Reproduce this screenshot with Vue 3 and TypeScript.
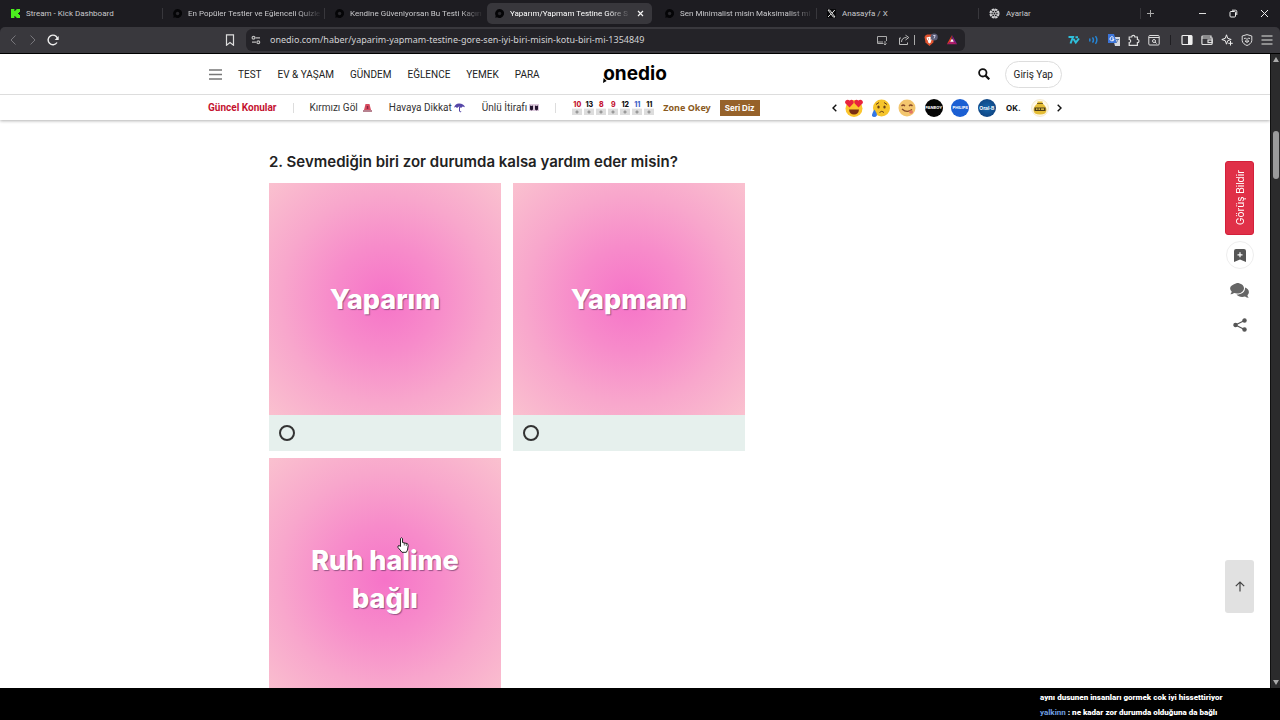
<script setup lang="ts">
import { ref } from 'vue'

interface Tab {
  title: string
  icon: 'kick' | 'onedio' | 'x' | 'gear'
}

interface Tile {
  value: number
  color: string
}

const tabs: Tab[] = [
  { title: 'Stream - Kick Dashboard', icon: 'kick' },
  { title: 'En Popüler Testler ve Eğlenceli Quizle', icon: 'onedio' },
  { title: 'Kendine Güveniyorsan Bu Testi Kaçırı', icon: 'onedio' },
  { title: 'Yaparım/Yapmam Testine Göre S', icon: 'onedio' },
  { title: 'Sen Minimalist misin Maksimalist mi', icon: 'onedio' },
  { title: 'Anasayfa / X', icon: 'x' },
  { title: 'Ayarlar', icon: 'gear' },
]
const activeTab = ref(3)
const url = ref('onedio.com/haber/yaparim-yapmam-testine-gore-sen-iyi-biri-misin-kotu-biri-mi-1354849')

const sections = ['TEST', 'EV & YAŞAM', 'GÜNDEM', 'EĞLENCE', 'YEMEK', 'PARA']
const tiles: Tile[] = [
  { value: 10, color: '#c4122f' },
  { value: 13, color: '#111' },
  { value: 8, color: '#c4122f' },
  { value: 9, color: '#c4122f' },
  { value: 12, color: '#111' },
  { value: 11, color: '#3f62c8' },
  { value: 11, color: '#111' },
]

const answers = ['Yaparım', 'Yapmam', 'Ruh halime bağlı']
const picked = ref('')
</script>

<template>
  <div class="screen">
    <header class="chrome">
      <div class="tabstrip">
        <div class="tabs" role="tablist">
          <button
            v-for="(tab, i) in tabs"
            :key="tab.title"
            type="button"
            role="tab"
            class="tab"
            :class="{ active: i === activeTab, divided: i !== activeTab && i !== activeTab - 1 }"
            :aria-selected="i === activeTab"
            @click="activeTab = i"
          >
            <svg v-if="tab.icon === 'kick'" class="fav" viewBox="0 0 9 9"><path fill="#4bf01e" d="M0 0h3.400v2h1V1h1V0H9v3H8v1H7v1h1v1h1v3H5.400V8h-1V7h-1v2H0z" /></svg>
            <svg v-else-if="tab.icon === 'onedio'" class="fav" viewBox="0 0 9 9"><path fill="#050507" d="M4.600 0a4.500 4.500 0 1 1-2.600 8.200L.4 9l.2-2.500A4.500 4.500 0 0 1 4.600 0z" /><circle cx="4.600" cy="4.500" r="1.700" fill="#29282c" /></svg>
            <svg v-else-if="tab.icon === 'x'" class="fav" viewBox="0 0 9 9"><rect width="9" height="9" fill="#08080a" /><path fill="none" stroke="#ddd" d="M1 1h1.700l5.300 7H6.300zM7.800 1L5.200 4M3.800 5.200L1 8" /></svg>
            <svg v-else class="fav wide" viewBox="0 0 12 12" fill="none" stroke="#d6d6d8"><circle cx="6" cy="6" r="4.800" stroke-width="1.400" stroke-dasharray="2.900 .87" /><circle cx="6" cy="6" r="3.800" /><circle cx="6" cy="6" r="1.400" /><path stroke-width=".8" d="M6 1.500v3M6 7.500v3M2 3.800l2.700 1.500M7.300 6.700L10 8.200M10 3.800L7.300 5.300M4.700 6.700L2 8.200" /></svg>
            <span class="tab-title" :class="{ faded: tab.title.length > 28 }">{{ tab.title }}</span>
            <svg v-if="i === activeTab" class="close" viewBox="0 0 7 7" stroke="#f4f4f4" stroke-width="1.200"><path d="M1 1l5 5M6 1L1 6" /></svg>
          </button>
        </div>
        <button type="button" class="plain" aria-label="Yeni sekme"><svg width="9" height="9" viewBox="0 0 9 9" stroke="#aaa"><path d="M4.500 1v7M1 4.500h7" /></svg></button>
        <div class="window-buttons">
          <button type="button" class="plain" aria-label="Küçült"><svg width="9" height="9" viewBox="0 0 9 9" stroke="#ddd"><path d="M1 4.500h7" /></svg></button>
          <button type="button" class="plain" aria-label="Geri yükle"><svg width="9" height="9" viewBox="0 0 9 9" stroke="#eee" fill="none"><rect x="1" y="2.500" width="5.500" height="5.500" rx="1" /><path d="M3 1.200h3.500a1.300 1.300 0 0 1 1.300 1.300V6" /></svg></button>
          <button type="button" class="plain" aria-label="Kapat"><svg width="9" height="9" viewBox="0 0 9 9" stroke="#eee"><path d="M1 1l7 7M8 1L1 8" /></svg></button>
        </div>
      </div>

      <div class="toolbar">
        <div class="tools-left">
          <button type="button" class="plain" aria-label="Geri"><svg viewBox="0 0 12 12" stroke="#77767b"><path d="M8.500 1.500L4 6l4.500 4.500" /></svg></button>
          <button type="button" class="plain" aria-label="İleri"><svg viewBox="0 0 12 12" stroke="#77767b"><path d="M3.500 1.500L8 6l-4.500 4.500" /></svg></button>
          <button type="button" class="plain" aria-label="Yenile"><svg viewBox="0 0 12 12" stroke="#eee" stroke-width="1.400"><path d="M10 8.500A4.800 4.800 0 1 1 10.500 4.500" /><path fill="#eee" stroke="none" d="M11.700 2v4H7.700z" /></svg></button>
          <button type="button" class="plain push" aria-label="Yer imi"><svg viewBox="0 0 12 12" stroke="#ddd" stroke-width="1.200"><path d="M2.500.8h7v10.400L6 8.500l-3.500 2.700z" /></svg></button>
        </div>
        <div class="address">
          <svg viewBox="0 0 12 12" stroke="#bbb" stroke-width="1.200"><circle cx="3.500" cy="3.800" r="1.400" /><path d="M5.500 3.800H10M2 8.200h4" /><circle cx="8.300" cy="8.200" r="1.400" /></svg>
          <input v-model="url" type="text" class="url" aria-label="Adres" />
          <svg viewBox="0 0 12 12" stroke="#aaa"><path d="M7 9.500H1.500v-7h9V7M1 8h6M9 7v4M7.500 9.500L9 11l1.500-1.500" /></svg>
          <svg class="share-page" viewBox="0 0 12 12" stroke="#bbb"><path d="M3 4H1.500v6.500h8V8.500M3.500 8c0-3 2-4.500 5-4.500M7.500 1.200l3.300 2.300-3.300 2.500" /></svg>
          <i class="bar light"></i>
          <svg class="shield" viewBox="0 0 15 14"><path fill="#e1532f" d="M2.500 2.500L4 1.500h5l1.500 1 .8 1.500-1 5.500L6.500 13l-4-3.500-1-5.500z" /><path fill="#fff" d="M3.500 4.500l3-.7 3 .7-.6 2.500-1.200 1 .5 1L6.500 10.500 4.800 9l.5-1-1.200-1z" /><path fill="#e1532f" d="M5 5.500h1v1H5zM7.300 5.500h1v1h-1z" /><circle cx="11.200" cy="4" r="3.600" fill="#5a5d77" /><path stroke="#e8e8ff" stroke-width=".8" fill="none" d="M10.200 2.500h2L11 5.500" /></svg>
          <svg viewBox="0 0 12 12"><path fill="#e33b24" d="M6 1L.8 10.300 5 7.200z" /><path fill="#8b1d8b" d="M6 1l5.200 9.300L7 7.200z" /><path fill="#b01d6b" d="M.8 10.300L6 6.500l5.200 3.800z" /><path fill="#fff" d="M6 4.500l1.800 3.300H4.200z" /></svg>
        </div>
        <div class="tools-right">
          <svg viewBox="0 0 12 12" stroke="#2fc0dc" stroke-width="2"><path d="M.5 3h4.500L2.500 9.500M5.500 5l2.300 3.500L11 4.500M7.500 3.300h2.500" /></svg>
          <svg viewBox="0 0 12 12" stroke="#2486d8" stroke-width="1.400"><path d="M1.500 4.500q1 1.500 0 3M4.500 3.300q2 2.700 0 5.400M7.500 2.200q2.800 3.800 0 7.600" /></svg>
          <svg viewBox="0 0 12 12"><path fill="#d6d9df" d="M4.500 3H12v9H7z" /><path fill="#3c74d8" d="M0 0h6l2.800 9H0z" /><path stroke="#fff" d="M5.500 3.500A2 2 0 1 0 6 5H4" /><path stroke="#5b7ba8" d="M8 5.500h3M9.500 5c0 2-.5 3-1.500 4" /></svg>
          <svg viewBox="0 0 12 12" stroke="#ddd" stroke-width="1.200"><path d="M1.200 3h2.500a1.600 1.600 0 1 1 3.200 0h2.500v2.500a1.600 1.600 0 1 1 0 3.200V11.300H1.200V8.500a1.500 1.500 0 1 0 0-3z" /></svg>
          <svg viewBox="0 0 12 12" stroke="#ddd"><rect x=".8" y="1.500" width="10.400" height="9.500" rx="1" /><path d="M.8 3.500h10.400M7 8l1.700 1.500" /><circle cx="6" cy="7" r="1.500" /></svg>
          <i class="bar dark"></i>
          <svg viewBox="0 0 12 12" stroke="#eee" stroke-width="1.200"><rect x="1" y="1.500" width="10" height="9" rx="1" /><path fill="#eee" stroke="none" d="M7 1.500h4v9H7z" /></svg>
          <svg viewBox="0 0 12 12" stroke="#ddd" stroke-width="1.200"><path d="M10 4V2H1.800a.9.900 0 0 0-.9.900v6.600a1 1 0 0 0 1 1h8.200a1 1 0 0 0 1-1V4H1" /><rect x="7" y="6" width="4.200" height="2.600" /></svg>
          <svg viewBox="0 0 12 12" stroke="#eee"><path d="M5.500.8l1.200 3.500 3.500 1.200L6.700 6.700 5.500 10.200 4.300 6.700.8 5.500l3.500-1.200zM9.500 7v4.500M7.300 9.300h4.500" /></svg>
          <svg viewBox="0 0 12 12" stroke="#ddd"><path d="M6 .6L10.800 2v4.500C10.800 9 8 10.800 6 11.500 4 10.800 1.200 9 1.200 6.500V2zM3 4.500q1.300-.8 2.500.3L6 5.500l.5-.7Q7.700 3.700 9 4.500M4 7h4L6 8.500z" /></svg>
          <svg viewBox="0 0 12 12" stroke="#aaa" stroke-width="1.400"><path d="M.5 2h11M.5 6h11M.5 10h11" /></svg>
        </div>
      </div>
    </header>

    <div class="viewport">
      <main class="page">
        <div class="site-head">
          <div class="row main-row">
            <nav class="nav">
              <button type="button" class="plain" aria-label="Menü"><svg width="13" height="11" viewBox="0 0 13 11" stroke="#777" stroke-width="1.600"><path d="M0 1h13M0 5.500h13M0 10h13" /></svg></button>
              <a v-for="s in sections" :key="s" href="#">{{ s }}</a>
            </nav>
            <a class="logo" href="#"><span>onedio</span><svg class="tail" viewBox="0 0 5 5"><path d="M0 5L.6 0l3 3z" /></svg></a>
            <div class="account">
              <button type="button" class="plain" aria-label="Ara"><svg width="12" height="12" viewBox="0 0 12 12" fill="none" stroke="#111"><circle cx="4.800" cy="4.800" r="3.700" stroke-width="1.800" /><path stroke-width="2.200" d="M7.600 7.600l3.700 3.700" /></svg></button>
              <button type="button" class="login">Giriş Yap</button>
            </div>
          </div>
          <div class="topics">
            <div class="row topic-row">
              <a class="hot" href="#">Güncel Konular</a>
              <i class="split"></i>
              <a href="#">Kırmızı Göl <svg width="9" height="9" viewBox="0 0 9 9"><path fill="#d64a5e" d="M2.500 1h4L8 7H1z" /><path fill="#8c2742" d="M3.800 3h1.500v3H3.800z" /><path fill="#b78290" d="M0 7h9v2H0z" /></svg></a>
              <a class="tight" href="#">Havaya Dikkat<svg width="11" height="10" viewBox="0 0 11 10"><path fill="#5546a8" d="M0 4.500Q1.500.5 5 .6 9.500.5 11 4.200L8.700 3.500 7 5 5 3.600 3 5 1.800 4z" /><path stroke="#5546a8" fill="none" d="M5.500 4v4q.4 1.500 1.700.5" /></svg></a>
              <a class="tight" href="#">Ünlü İtirafı<svg width="10" height="8" viewBox="0 0 10 8"><path fill="#a779a8" d="M0 0h10v7H0z" opacity=".4" /><path fill="#24152f" d="M1 1.500l1.500.5 1.500-.5v4L2.500 6.500 1 5.500zM6 1.500l1.500.5L9 1.500v4L7.500 6.500 6 5.500z" /></svg></a>
              <i class="split"></i>
              <div class="okey">
                <span class="tiles">
                  <span v-for="(t, i) in tiles" :key="i" class="tile" :style="{ color: t.color }">{{ t.value }}</span>
                </span>
                <a class="zone" href="#">Zone Okey</a>
                <button type="button" class="seri">Seri Diz</button>
              </div>
              <div class="stories">
                <button type="button" class="plain" aria-label="Önceki"><svg width="5" height="8" viewBox="0 0 5 8" fill="none" stroke="#111" stroke-width="1.400"><path d="M4.300.8L1 4l3.300 3.200" /></svg></button>
                <div class="circles">
                  <svg viewBox="0 0 18 18"><circle cx="9" cy="9.500" r="8.500" fill="#fbc52d" /><path fill="#e8243d" d="M4.500 8.500L.3 4.200C-.8 1.500 2.500-.5 4.700 1.500 7-.4 9.500 1.800 8.500 4.200zM13.500 8.500L9.500 4.200c-1-2.500 1.500-4.500 3.800-2.700 2.400-2 5.400 0 4.400 2.700z" /><path fill="#7b2e12" d="M4 10.500h10q-.5 5-5 5t-5-5z" /></svg>
                  <svg viewBox="0 0 18 18"><circle cx="9.500" cy="9" r="8.500" fill="#f6c52b" /><g fill="#694017"><ellipse cx="6.500" cy="8" rx="1.200" ry="1.600" /><ellipse cx="12.500" cy="8" rx="1.200" ry="1.600" /></g><path fill="none" stroke="#694017" d="M4 5.500l3-2M15 5.500l-3-2M7.500 13.500q2.300-2.500 4.500 0" /><path fill="#3478e5" d="M2.500 10.500q3 4.500 2.300 6-.8 1.500-2.600 1.500T0 16.500q-.3-2 2.500-6z" /></svg>
                  <svg viewBox="0 0 18 18"><circle cx="9" cy="9" r="8.500" fill="#f3c66e" /><path fill="none" stroke="#844729" stroke-width="1.300" d="M3.500 7q1.700-2 3.500 0M11 7q1.700-2 3.500 0M4 10q5 4.500 10 .5" /><ellipse cx="13" cy="13" rx="2" ry="1.700" fill="#e47664" /></svg>
                  <span class="brand black">PANBOY</span>
                  <span class="brand blue">PHILIPS</span>
                  <span class="brand navy">Oral·B</span>
                  <span class="brand ok">OK.</span>
                  <svg viewBox="0 0 18 18"><circle cx="9" cy="9" r="8.500" fill="#fff8e6" stroke="#eee2c5" stroke-width=".7" /><path fill="#e5bd35" d="M6.500 2.500h5v2q4 3 4 6.500 0 4.500-6.500 4.500T2.500 11q0-3.500 4-6.500z" /><path fill="#4d3d16" d="M3.500 8.500h11v3.500h-11zM6 4h6v.8H6z" /><path stroke="#f4d65c" stroke-width="1.200" d="M5 10.200h1.500M7.500 10.200H9M10 10.200h3" /></svg>
                </div>
                <button type="button" class="plain" aria-label="Sonraki"><svg width="5" height="8" viewBox="0 0 5 8" fill="none" stroke="#111" stroke-width="1.400"><path d="M.7.800L4 4 .7 7.200" /></svg></button>
              </div>
            </div>
          </div>
        </div>

        <section class="row quiz">
          <h2>2. Sevmediğin biri zor durumda kalsa yardım eder misin?</h2>
          <div class="answers">
            <label v-for="a in answers" :key="a" class="answer">
              <span class="art">{{ a }}</span>
              <span class="pick"><input v-model="picked" type="radio" name="answer" :value="a" :aria-label="a" /></span>
            </label>
          </div>
        </section>

        <aside class="rail">
          <button type="button" class="feedback">Görüş Bildir</button>
          <button type="button" class="round" aria-label="Kaydet"><svg width="12" height="13" viewBox="0 0 12 13"><path fill="#555" d="M2 0h8a2 2 0 0 1 2 2v11L6 10.500 0 13V2a2 2 0 0 1 2-2z" /><path stroke="#fff" stroke-width="1.200" d="M6 3.300v5M3.500 5.800h5" /></svg></button>
          <button type="button" class="plain" aria-label="Yorumlar"><svg width="19" height="15" viewBox="0 0 19 15" fill="#666"><path d="M7 0c3.900 0 7 2.300 7 5.200s-3.100 5.300-7 5.300c-1 0-2-.2-2.900-.5Q2.400 11.200.3 11.200 1.500 10 1.700 8.500.1 7 .1 5.200.1 2.300 7 0z" /><path d="M15 4.500c2.300.7 3.900 2.300 3.900 4.500 0 1.200-.6 2.300-1.500 3.200q.3 1.500 1.400 2.500-2.200 0-3.800-1.200c-3.200 1-6.900.2-8.500-2C11.500 11.500 15.500 9 15 4.500z" /></svg></button>
          <button type="button" class="plain" aria-label="Paylaş"><svg width="14" height="14" viewBox="0 0 14 14" fill="#555" stroke="#555" stroke-width="1.300"><path fill="none" d="M11.500 2.500L2.500 7l9 4.500" /><circle cx="11.500" cy="2.500" r="1.600" /><circle cx="2.500" cy="7" r="1.600" /><circle cx="11.500" cy="11.500" r="1.600" /></svg></button>
          <button type="button" class="to-top" aria-label="Yukarı çık"><svg width="10" height="11" viewBox="0 0 10 11" fill="none" stroke="#444" stroke-width="1.200"><path d="M5 10.500V1M.8 5.200L5 1l4.200 4.200" /></svg></button>
        </aside>

        <svg class="pointer" width="12" height="16" viewBox="0 0 12 16"><path fill="#fff" stroke="#222" d="M3.500 9.500V1.500q1-1.500 2 0v4l4.500 1q1.300.5 1.200 2l-.7 4.500-1.200 2.300H5L1 10.500Q.5 8.500 2 8.500z" /><path stroke="#222" stroke-width=".7" d="M7.300 6v2.500M9.300 6.500V9" /></svg>
      </main>
      <div class="scrollbar">
        <svg width="6" height="5" viewBox="0 0 6 5"><path fill="#aaa" d="M3 0l3 5H0z" /></svg>
        <div class="track"><div class="thumb"></div></div>
        <svg width="6" height="5" viewBox="0 0 6 5"><path fill="#aaa" d="M0 0h6L3 5z" /></svg>
      </div>
    </div>

    <footer class="chat">
      <div class="messages">
        <p>aynı dusunen insanları gormek cok iyi hissettiriyor</p>
        <p><b>yalkinn</b> : ne kadar zor durumda olduğuna da bağlı</p>
      </div>
    </footer>
  </div>
</template>

<style>
body {
  background: #000;
}
</style>

<style scoped>
.screen {
  display: flex;
  flex-direction: column;
  height: 100vh;
  overflow: hidden;
  background: #000;
  font-family: Roboto, Inter, sans-serif;
}
.screen * {
  box-sizing: border-box;
}
button,
input {
  font: inherit;
  color: inherit;
  margin: 0;
}
button {
  padding: 0;
  border: 0;
  cursor: pointer;
}
a {
  color: inherit;
  text-decoration: none;
}
svg {
  flex: none;
}
.plain {
  display: flex;
  align-items: center;
  justify-content: center;
  background: none;
}
.chrome {
  background: #1d1c21;
  color: #c9c9cc;
  border-bottom: 1px solid #000;
}
.tabstrip {
  display: flex;
  align-items: center;
  height: 27px;
  padding: 0 11px 0 1px;
}
.tabs {
  display: flex;
  flex: 1;
  min-width: 0;
  height: 21px;
  margin-right: 5px;
}
.tab {
  position: relative;
  display: flex;
  align-items: center;
  flex: 1 1 0;
  min-width: 0;
  gap: 6px;
  padding: 0 3px 0 10px;
  background: none;
  border-radius: 5px;
  font-size: 8px;
  text-align: left;
}
.tab.divided::after {
  content: "";
  position: absolute;
  right: 0;
  top: 5px;
  height: 11px;
  border-right: 1px solid #38373c;
}
.tab.active {
  background: #38373c;
  color: #fff;
  padding: 0 8px;
  margin-right: 3px;
}
.fav {
  width: 9px;
  height: 9px;
}
.fav.wide {
  width: 11px;
  height: 11px;
}
.tab-title {
  flex: 1;
  min-width: 0;
  overflow: hidden;
  white-space: nowrap;
  line-height: 14px;
}
.faded {
  mask-image: linear-gradient(90deg, #000 calc(100% - 24px), transparent);
}
.close {
  width: 7px;
  height: 7px;
}
.window-buttons {
  display: flex;
  gap: 22px;
  margin-left: 43px;
}
.toolbar {
  display: flex;
  align-items: center;
  height: 26px;
  background: #39383d;
  border-radius: 5px 5px 0 0;
}
.toolbar svg {
  width: 12px;
  height: 12px;
  fill: none;
}
.tools-left,
.tools-right {
  display: flex;
  align-items: center;
  gap: 8px;
}
.tools-left {
  flex: 0 0 246px;
  padding: 0 10px 0 7px;
}
.push {
  margin-left: auto;
}
.tools-right {
  flex: 0 0 315px;
  justify-content: flex-end;
  padding-right: 7px;
}
.address {
  display: flex;
  align-items: center;
  flex: 1;
  min-width: 0;
  height: 22px;
  gap: 8px;
  padding: 0 7px 0 4px;
  background: #242328;
  border-radius: 6px;
}
.url {
  flex: 1;
  min-width: 0;
  padding: 0;
  border: 0;
  outline: 0;
  background: none;
  color: #d2d2d4;
  font: 9px/14px "Noto Sans", sans-serif;
}
.address .share-page {
  margin-left: 2px;
}
.address .shield {
  width: 15px;
  height: 14px;
}
.bar {
  flex: none;
  width: 1px;
  height: 10px;
}
.bar.light {
  background: #aaa;
  margin: 0 0 0 -4px;
}
.bar.dark {
  background: #1f1e22;
  margin: 0 2px;
}
.viewport {
  display: flex;
  flex: 1;
  min-height: 0;
}
.page {
  position: relative;
  flex: 1;
  min-width: 0;
  overflow: hidden;
  background: #fff;
  color: #222;
}
.row {
  width: 100%;
  max-width: 854px;
  margin: 0 auto;
}
.site-head {
  background: #fff;
  box-shadow: 0 1px 3px rgba(0, 0, 0, 0.3);
}
.main-row {
  display: grid;
  grid-template-columns: 1fr auto 1fr;
  align-items: center;
  height: 40px;
}
.nav {
  display: flex;
  align-items: center;
  gap: 16px;
  padding-left: 1px;
  font-size: 10px;
  white-space: nowrap;
}
.logo {
  position: relative;
  color: #000;
  font: 700 19px/24px Inter, sans-serif;
}
.tail {
  position: absolute;
  left: 0;
  bottom: 3px;
  width: 5px;
  height: 5px;
}
.account {
  display: flex;
  align-items: center;
  justify-content: flex-end;
  gap: 15px;
}
.login {
  height: 27px;
  padding: 0 8px;
  border: 1px solid #ddd;
  border-radius: 14px;
  background: #fff;
  font-size: 10px;
}
.topics {
  border-top: 1px solid #ddd;
}
.topic-row {
  display: flex;
  align-items: center;
  gap: 17px;
  height: 25px;
  color: #333;
  font-size: 10px;
  white-space: nowrap;
}
.topic-row > a {
  display: flex;
  align-items: center;
  gap: 5px;
}
.topic-row > a.tight {
  gap: 2px;
}
.topic-row > .hot {
  color: #c4122f;
  font-weight: 700;
}
.split {
  width: 1px;
  height: 10px;
  margin: 0 -1px;
  background: #ddd;
}
.okey {
  display: flex;
  align-items: center;
  gap: 9px;
}
.tiles {
  display: flex;
  gap: 2px;
}
.tile {
  width: 10px;
  height: 14px;
  background: radial-gradient(circle at 5px 11px, #999 1px, transparent 2px), linear-gradient(#fff 50%, #ddd 60%);
  font: 800 7px/8px Inter, sans-serif;
  text-align: center;
}
.zone {
  color: #8a5a22;
  font: 700 9px/14px "Noto Sans", sans-serif;
}
.seri {
  height: 16px;
  padding: 0 5px;
  background: #96622a;
  color: #fff;
  font: 700 8px/14px Inter, sans-serif;
}
.stories {
  display: flex;
  align-items: center;
  gap: 8px;
  margin-left: auto;
}
.circles {
  display: flex;
  justify-content: space-between;
  width: 204px;
}
.circles > * {
  width: 18px;
  height: 18px;
}
.brand {
  display: flex;
  align-items: center;
  justify-content: center;
  overflow: hidden;
  border-radius: 50%;
  color: #fff;
  font: 700 4px/6px Inter, sans-serif;
}
.black {
  background: #050505;
}
.blue {
  background: #1b5fd3;
}
.navy {
  background: radial-gradient(#1767ac, #0c3874);
  font-size: 5px;
}
.ok {
  color: #111;
  font-size: 8px;
}
.quiz {
  padding: 32px 0 0 61px;
}
h2 {
  margin: 0 0 11px;
  font: 600 15px/20px Inter, sans-serif;
}
.answers {
  display: grid;
  grid-template-columns: 232px 232px;
  gap: 7px 12px;
}
.art {
  display: flex;
  align-items: center;
  justify-content: center;
  min-height: 232px;
  padding: 84px 36px 82px;
  background: radial-gradient(circle at 50% 50%, #f673c8 0%, #f78bca 32%, #f8a7cc 64%, #fac1cf 100%);
  color: #fff;
  font: 800 27px/38px Inter, sans-serif;
  text-align: center;
  text-shadow: 1px 1px 1px rgba(90, 50, 90, 0.6);
}
.pick {
  display: flex;
  align-items: center;
  height: 36px;
  padding-left: 10px;
  background: #e6f0ed;
}
.pick input {
  appearance: none;
  width: 16px;
  height: 16px;
  border: 2px solid #333;
  border-radius: 50%;
}
.pick input:checked {
  background: #111;
}
.rail {
  position: absolute;
  top: 107px;
  right: 16px;
  bottom: 75px;
  display: flex;
  flex-direction: column;
  align-items: center;
  width: 29px;
}
.feedback {
  width: 29px;
  height: 74px;
  border: 1px solid #d3203a;
  border-radius: 3px;
  background: #e03048;
  color: #fff;
  font: 10px/14px Inter, sans-serif;
  writing-mode: vertical-rl;
  rotate: 180deg;
}
.round {
  display: flex;
  align-items: center;
  justify-content: center;
  width: 28px;
  height: 28px;
  margin: 6px 0 14px;
  border: 1px solid #eee;
  border-radius: 50%;
  background: #fff;
}
.rail .plain + .plain {
  margin-top: 20px;
}
.to-top {
  display: flex;
  align-items: center;
  justify-content: center;
  width: 29px;
  height: 53px;
  margin-top: auto;
  border-radius: 3px;
  background: #e1e1e1;
}
.pointer {
  position: absolute;
  left: 397px;
  top: 483px;
}
.scrollbar {
  display: flex;
  flex-direction: column;
  align-items: center;
  width: 10px;
  padding: 3px 0;
  background: #2b2b2c;
  border-left: 1px solid #111;
}
.track {
  flex: 1;
  width: 6px;
  padding-top: 69px;
}
.thumb {
  height: 48px;
  border-radius: 3px;
  background: #9a9a9b;
}
.chat {
  display: flex;
  justify-content: flex-end;
  height: 32px;
  padding-right: 52px;
  overflow: hidden;
}
.messages {
  width: 188px;
  padding-top: 2px;
  color: #fff;
  font: 900 8px/15px Roboto, sans-serif;
  white-space: nowrap;
}
.messages p {
  margin: 0;
}
.messages b {
  color: #6f9fe0;
  font-weight: 700;
}
</style>
